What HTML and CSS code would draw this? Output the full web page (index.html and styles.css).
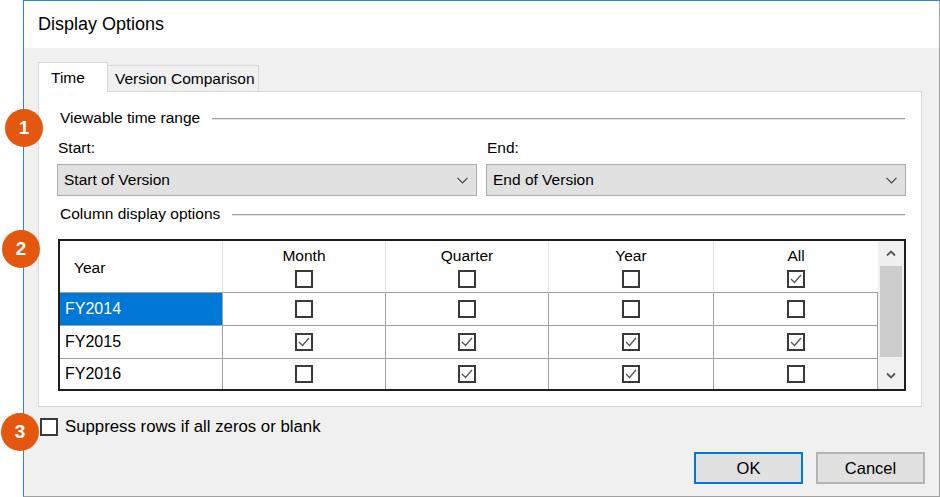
FILE: index.html
```html
<!DOCTYPE html>
<html>
<head>
<meta charset="utf-8">
<title>Display Options</title>
<link rel="stylesheet" href="styles.css">
</head>
<body>
<div class="page">
  <div class="window">
    <div class="titlebar">Display Options</div>
    <div class="content">
      <div class="tabs">
        <div class="tab active">Time</div>
        <div class="tab">Version Comparison</div>
      </div>
      <div class="panel">
        <div class="group-head"><span>Viewable time range</span><i class="rule"></i></div>
        <div class="range">
          <div class="field">
            <div class="label">Start:</div>
            <div class="combo"><span>Start of Version</span><svg class="chev" width="11" height="7" viewBox="0 0 11 7"><polyline points="0.5,0.8 5.5,5.8 10.5,0.8" fill="none" stroke="#444" stroke-width="1.2"/></svg></div>
          </div>
          <div class="field">
            <div class="label">End:</div>
            <div class="combo"><span>End of Version</span><svg class="chev" width="11" height="7" viewBox="0 0 11 7"><polyline points="0.5,0.8 5.5,5.8 10.5,0.8" fill="none" stroke="#444" stroke-width="1.2"/></svg></div>
          </div>
        </div>
        <div class="group-head second"><span>Column display options</span><i class="rule"></i></div>
        <div class="grid">
          <div class="cells">
            <div class="hcell first">Year</div>
            <div class="hcell"><span>Month</span><span class="cb"></span></div>
            <div class="hcell"><span>Quarter</span><span class="cb"></span></div>
            <div class="hcell"><span>Year</span><span class="cb"></span></div>
            <div class="hcell last"><span>All</span><span class="cb checked"><svg width="14" height="14" viewBox="0 0 14 14"><polyline points="2,7 5.5,10.5 12,3" fill="none" stroke="#555" stroke-width="1.3"/></svg></span></div>

            <div class="cell name selected">FY2014</div>
            <div class="cell"><span class="cb"></span></div>
            <div class="cell"><span class="cb"></span></div>
            <div class="cell"><span class="cb"></span></div>
            <div class="cell"><span class="cb"></span></div>

            <div class="cell name">FY2015</div>
            <div class="cell"><span class="cb checked"><svg width="14" height="14" viewBox="0 0 14 14"><polyline points="2,7 5.5,10.5 12,3" fill="none" stroke="#555" stroke-width="1.3"/></svg></span></div>
            <div class="cell"><span class="cb checked"><svg width="14" height="14" viewBox="0 0 14 14"><polyline points="2,7 5.5,10.5 12,3" fill="none" stroke="#555" stroke-width="1.3"/></svg></span></div>
            <div class="cell"><span class="cb checked"><svg width="14" height="14" viewBox="0 0 14 14"><polyline points="2,7 5.5,10.5 12,3" fill="none" stroke="#555" stroke-width="1.3"/></svg></span></div>
            <div class="cell"><span class="cb checked"><svg width="14" height="14" viewBox="0 0 14 14"><polyline points="2,7 5.5,10.5 12,3" fill="none" stroke="#555" stroke-width="1.3"/></svg></span></div>

            <div class="cell name lastrow">FY2016</div>
            <div class="cell lastrow"><span class="cb"></span></div>
            <div class="cell lastrow"><span class="cb checked"><svg width="14" height="14" viewBox="0 0 14 14"><polyline points="2,7 5.5,10.5 12,3" fill="none" stroke="#555" stroke-width="1.3"/></svg></span></div>
            <div class="cell lastrow"><span class="cb checked"><svg width="14" height="14" viewBox="0 0 14 14"><polyline points="2,7 5.5,10.5 12,3" fill="none" stroke="#555" stroke-width="1.3"/></svg></span></div>
            <div class="cell lastrow"><span class="cb"></span></div>
          </div>
          <div class="scrollbar">
            <svg class="arrow" width="10" height="7" viewBox="0 0 10 7"><polyline points="1,5.5 5,1.5 9,5.5" fill="none" stroke="#555" stroke-width="1.8"/></svg>
            <div class="thumb"></div>
            <svg class="arrow" width="10" height="7" viewBox="0 0 10 7"><polyline points="1,1.5 5,5.5 9,1.5" fill="none" stroke="#555" stroke-width="1.8"/></svg>
          </div>
        </div>
      </div>
      <div class="suppress"><span class="cb"></span><span class="suppress-label">Suppress rows if all zeros or blank</span></div>
      <div class="buttons">
        <button class="btn ok">OK</button>
        <button class="btn">Cancel</button>
      </div>
    </div>
  </div>
  <div class="badge b1">1</div>
  <div class="badge b2">2</div>
  <div class="badge b3">3</div>
</div>
</body>
</html>
```

FILE: styles.css
```css
* { box-sizing: border-box; }
html, body { margin: 0; padding: 0; background: #fff; }
body {
  font-family: "Liberation Sans", Arial, sans-serif;
  font-size: 16px;
  color: #000;
}
.page {
  position: relative;
  width: 940px;
  height: 497px;
  overflow: hidden;
  background: #fff;
}
.window {
  margin-left: 23px;
  width: 917px;
  height: 497px;
  border-top: 1px solid #2b88d8;
  border-left: 1px solid #2b88d8;
  border-right: 1px solid #a0a0a0;
  border-bottom: 1px solid #a0a0a0;
  background: #f0f0f0;
  display: flex;
  flex-direction: column;
  overflow: hidden;
}
.titlebar {
  height: 47px;
  flex: none;
  background: #fff;
  padding-left: 14px;
  display: flex;
  align-items: center;
  font-size: 18px;
  color: #000;
}
.content {
  flex: 1;
  padding: 14px 14px 0 14px;
  display: flex;
  flex-direction: column;
}
.tabs {
  display: flex;
  align-items: flex-start;
  height: 29px;
  position: relative;
  z-index: 1;
}
.tab {
  height: 26px;
  margin-top: 3px;
  border: 1px solid #d9d9d9;
  border-left: none;
  border-bottom: none;
  background: #f0f0f0;
  padding-left: 7px;
  padding-right: 0;
  display: flex;
  align-items: center;
  width: 151px;
  font-size: 15.5px;
  white-space: nowrap;
}
.tab.active {
  width: 70px;
  height: 30px;
  margin-top: 0;
  border-left: 1px solid #d9d9d9;
  background: #fff;
  padding-left: 12px;
}
.panel {
  width: 884px;
  height: 316px;
  background: #fff;
  border: 1px solid #d9d9d9;
  padding: 16px 15px 0 18px;
}
.group-head {
  height: 20px;
  display: flex;
  align-items: center;
  padding-left: 3px;
  font-size: 15.5px;
  white-space: nowrap;
}
.group-head .rule {
  flex: 1;
  height: 1px;
  background: #a0a0a0;
  box-shadow: 0 1px 0 #e3e3e3;
  margin-left: 12px;
  margin-right: 1px;
}
.group-head.second { margin-top: 8px; }
.range {
  margin-top: 10px;
  display: grid;
  grid-template-columns: 420px 420px;
  column-gap: 9px;
}
.label {
  height: 20px;
  line-height: 20px;
  padding-left: 1px;
  font-size: 15.5px;
}
.combo {
  margin-top: 6px;
  height: 32px;
  background: #e1e1e1;
  border: 1px solid #adadad;
  display: flex;
  align-items: center;
  justify-content: space-between;
  padding-left: 6px;
  padding-right: 8px;
  font-size: 15.5px;
}
.chev { display: block; }
.grid {
  margin-top: 15px;
  margin-left: 1px;
  width: 848px;
  height: 152px;
  border: 2px solid #1e1e1e;
  display: flex;
  overflow: hidden;
}
.cells {
  display: grid;
  grid-template-columns: 163px 163px 163px 165px 164px;
  grid-template-rows: 52px 33px 33px 30px;
}
.hcell {
  border-right: 1px solid #e3e3e3;
  border-bottom: 1px solid #a0a0a0;
  display: flex;
  flex-direction: column;
  align-items: center;
  padding-top: 4px;
  font-size: 15.5px;
}
.hcell span:first-child { line-height: 22px; height: 22px; }
.hcell .cb { margin-top: 3px; }
.hcell.first {
  flex-direction: row;
  align-items: center;
  padding-left: 14px;
  padding-top: 3px;
}
.hcell.last { border-right: none; }
.cell {
  border-right: 1px solid #a0a0a0;
  border-bottom: 1px solid #a0a0a0;
  display: flex;
  align-items: center;
  justify-content: center;
  font-size: 15.5px;
}
.cell.name {
  justify-content: flex-start;
  padding-left: 5px;
  font-size: 16px;
}
.cell.selected {
  background: #0078d7;
  color: #fff;
}
.cell.lastrow { border-bottom: none; }
.cb {
  width: 18px;
  height: 18px;
  border: 2px solid #3a3a3a;
  background: #fff;
  display: flex;
  align-items: center;
  justify-content: center;
  flex: none;
}
.cb svg { display: block; }
.scrollbar {
  flex: 1;
  background: #f0f0f0;
  display: flex;
  flex-direction: column;
  align-items: center;
}
.scrollbar .arrow { display: block; margin-top: 9px; }
.scrollbar .thumb {
  width: 22px;
  height: 91px;
  background: #cdcdcd;
  margin-top: 9px;
}
.scrollbar .arrow:last-child { margin-top: 15px; }
.suppress {
  margin-top: 11px;
  height: 18px;
  display: flex;
  align-items: center;
  padding-left: 2px;
}
.suppress-label {
  margin-left: 7px;
  font-size: 16.8px;
  white-space: nowrap;
}
.buttons {
  margin-top: 16px;
  display: flex;
  justify-content: flex-end;
  gap: 13px;
}
.btn {
  width: 109px;
  height: 32px;
  background: #e1e1e1;
  border: 2px solid #b4b4b4;
  font-family: "Liberation Sans", Arial, sans-serif;
  font-size: 16.5px;
  color: #000;
  padding: 0;
  margin: 0;
}
.btn.ok { border-color: #0078d7; }
.badge {
  position: absolute;
  width: 38px;
  height: 38px;
  border-radius: 50%;
  background: #e5570f;
  color: #fff;
  font-family: "Liberation Sans", Arial, sans-serif;
  font-weight: bold;
  font-size: 19px;
  display: flex;
  align-items: center;
  justify-content: center;
}
.b1 { left: 5px; top: 109px; }
.b2 { left: 2px; top: 230px; }
.b3 { left: 1px; top: 413px; }
```
